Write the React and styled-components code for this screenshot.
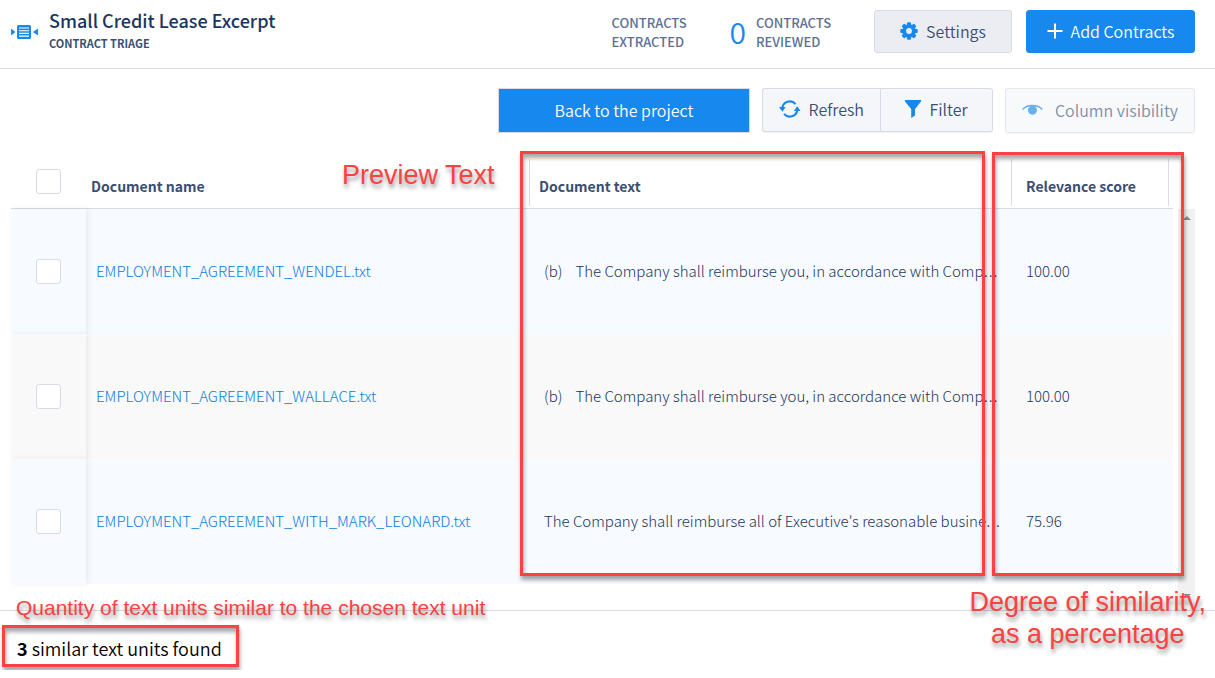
import React from 'react';
import styled, { createGlobalStyle } from 'styled-components';

const COLORS = {
  primary: '#1788ee',
  link: '#0c7be2',
  heading: '#1a3560',
  text: '#3a4f74',
  cell: '#21365c',
  muted: '#5c7096',
  border: '#d6dbe6',
  rowBlue: '#f7fbff',
  rowGray: '#f9f9f9',
  note: '#ff4141',
};

const ROWS = [
  {
    name: 'EMPLOYMENT_AGREEMENT_WENDEL.txt',
    clause: '(b)',
    text: 'The Company shall reimburse you, in accordance with Comp',
    score: '100.00',
  },
  {
    name: 'EMPLOYMENT_AGREEMENT_WALLACE.txt',
    clause: '(b)',
    text: 'The Company shall reimburse you, in accordance with Comp',
    score: '100.00',
  },
  {
    name: 'EMPLOYMENT_AGREEMENT_WITH_MARK_LEONARD.txt',
    text: "The Company shall reimburse all of Executive's reasonable busine",
    score: '75.96',
  },
];

const TriageIcon = () => (
  <svg width="28" height="16" viewBox="0 0 28 16" aria-hidden="true">
    <path d="M1 4.5v7L5.5 8z M28 4.5v7L23 8z" fill={COLORS.primary} />
    <rect x="7" y="1" width="14" height="14" rx="1.5" fill={COLORS.primary} />
    <path d="M9 4h10M9 6.7h10M9 9.4h10M9 12.1h10" stroke="#fff" strokeWidth="1.1" />
  </svg>
);

const GearIcon = () => (
  <svg width="18" height="18" viewBox="0 0 18 18" aria-hidden="true">
    <g fill={COLORS.primary}>
      {[0, 45, 90, 135].map((angle) => (
        <rect key={angle} x="7" y="0.3" width="4" height="17.4" rx="0.9" transform={`rotate(${angle} 9 9)`} />
      ))}
      <circle cx="9" cy="9" r="6.8" />
    </g>
    <circle cx="9" cy="9" r="2.9" fill="#ecedf3" />
  </svg>
);

const PlusIcon = () => (
  <svg width="16" height="16" viewBox="0 0 16 16" aria-hidden="true">
    <path d="M8 0.5v15M0.5 8h15" stroke="#fff" strokeWidth="2" />
  </svg>
);

const RefreshIcon = () => (
  <svg width="24" height="20" viewBox="0 0 24 20" aria-hidden="true">
    <g fill="none" stroke={COLORS.primary} strokeWidth="2.4">
      <path d="M3.6 9A8.4 8.4 0 0 1 18.4 4.6" />
      <path d="M20.4 11A8.4 8.4 0 0 1 5.6 15.4" />
    </g>
    <path d="M0 7.8h7.4L3.8 13z M24 12.2h-7.4L20.2 7z" fill={COLORS.primary} />
  </svg>
);

const FunnelIcon = () => (
  <svg width="16" height="18" viewBox="0 0 16 18" aria-hidden="true">
    <path d="M0 0h16v1.6L10 9v6.5L6.2 18V9L0 1.6z" fill={COLORS.primary} />
  </svg>
);

const EyeIcon = () => (
  <svg width="24" height="13" viewBox="0 0 24 13" aria-hidden="true">
    <path d="M0.8 6.4C5.5 0.4 18.5 0.4 23.2 6.4" fill="none" stroke={COLORS.primary} strokeWidth="1.8" />
    <circle cx="12" cy="7.2" r="5.2" fill={COLORS.primary} />
  </svg>
);

const App = () => {
  return (
    <Page>
      <GlobalStyle />
      <Header>
        <TriageIcon />
        <TitleBlock>
          <Title>Small Credit Lease Excerpt</Title>
          <Subtitle>CONTRACT TRIAGE</Subtitle>
        </TitleBlock>
        <Counter>
          <CounterLabel>CONTRACTS EXTRACTED</CounterLabel>
        </Counter>
        <Counter>
          <CounterValue>0</CounterValue>
          <CounterLabel>CONTRACTS REVIEWED</CounterLabel>
        </Counter>
        <HeaderActions>
          <SettingsButton>
            <GearIcon />
            Settings
          </SettingsButton>
          <AddButton>
            <PlusIcon />
            Add Contracts
          </AddButton>
        </HeaderActions>
      </Header>

      <Toolbar>
        <BackButton>Back to the project</BackButton>
        <ButtonGroup>
          <GroupButton>
            <RefreshIcon />
            Refresh
          </GroupButton>
          <GroupButton>
            <FunnelIcon />
            Filter
          </GroupButton>
        </ButtonGroup>
        <VisibilityButton disabled>
          <EyeIcon />
          Column visibility
        </VisibilityButton>
      </Toolbar>

      <TableArea>
        <Table>
          <colgroup>
            <CheckCol />
            <NameCol />
            <col />
            <ScoreCol />
            <EndCol />
          </colgroup>
          <thead>
            <tr>
              <CheckHead>
                <Checkbox type="checkbox" aria-label="Select all documents" />
              </CheckHead>
              <HeadCell $indent={5}>Document name</HeadCell>
              <HeadCell $indent={10} $divided>Document text</HeadCell>
              <HeadCell $indent={15} $divided>Relevance score</HeadCell>
              <HeadCell $divided />
            </tr>
          </thead>
          <tbody>
            {ROWS.map((row) => (
              <Row key={row.name}>
                <CheckCell>
                  <Checkbox type="checkbox" aria-label={`Select ${row.name}`} />
                </CheckCell>
                <Cell $indent={10}>
                  <DocLink href="#">{row.name}</DocLink>
                </Cell>
                <Cell $indent={15}>
                  {row.clause && <Clause>{row.clause}</Clause>}
                  {row.text}
                  <Ellipsis>…</Ellipsis>
                </Cell>
                <Cell $indent={15}>{row.score}</Cell>
                <Cell />
              </Row>
            ))}
          </tbody>
        </Table>
        <ScrollTrack aria-hidden="true">
          <ScrollArrow />
          <ScrollArrow $down />
        </ScrollTrack>
        <TextFrame />
        <ScoreFrame />
        <PreviewNote>Preview Text</PreviewNote>
      </TableArea>

      <Footer>
        <span>
          <strong>3</strong> similar text units found
        </span>
        <FoundFrame />
        <QuantityNote>Quantity of text units similar to the chosen text unit</QuantityNote>
        <DegreeNote>
          Degree of similarity,
          <br />
          as a percentage
        </DegreeNote>
      </Footer>
    </Page>
  );
};

export default App;

const GlobalStyle = createGlobalStyle`
  *, *::before, *::after {
    box-sizing: border-box;
  }
  body {
    margin: 0;
    background: #fff;
  }
  body, button {
    font-family: 'Noto Sans CJK SC', 'Noto Sans', sans-serif;
  }
`;

const Page = styled.div`
  color: ${COLORS.text};
  font-size: 15px;
  line-height: 20px;
`;

const Header = styled.header`
  display: flex;
  align-items: center;
  height: 69px;
  padding: 0 20px 5px 10px;
  border-bottom: 1px solid ${COLORS.border};
`;

const TitleBlock = styled.div`
  flex: 1;
  padding-left: 11px;
`;

const Title = styled.h1`
  margin: 0;
  color: ${COLORS.heading};
  font-size: 18px;
  font-weight: 500;
  line-height: 22px;
`;

const Subtitle = styled.div`
  font-size: 11px;
  font-weight: 700;
  line-height: 24px;
`;

const Counter = styled.div`
  display: flex;
  align-items: center;
  gap: 10px;
  margin-right: 40px;
`;

const CounterValue = styled.span`
  padding-bottom: 2px;
  color: ${COLORS.primary};
  font-size: 30px;
  font-weight: 350;
  line-height: 32px;
`;

const CounterLabel = styled.span`
  width: 78px;
  color: ${COLORS.muted};
  font-size: 13px;
  font-weight: 500;
  line-height: 19px;
`;

const HeaderActions = styled.div`
  display: flex;
  gap: 14px;
`;

const Button = styled.button`
  display: flex;
  align-items: center;
  justify-content: center;
  height: 44px;
  padding: 0 16px 2px;
  border: 1px solid ${COLORS.border};
  border-radius: 3px;
  background: #f4f6fa;
  color: ${COLORS.text};
  font-size: 16px;
  font-weight: 350;
  line-height: 24px;
  white-space: nowrap;
  cursor: pointer;
`;

const SettingsButton = styled(Button)`
  width: 138px;
  height: 43px;
  gap: 8px;
  background: #ecedf3;
`;

const AddButton = styled(Button)`
  width: 169px;
  height: 43px;
  gap: 8px;
  border-color: ${COLORS.primary};
  background: ${COLORS.primary};
  color: #fff;
`;

const Toolbar = styled.div`
  display: flex;
  justify-content: flex-end;
  gap: 12px;
  padding: 19px 20px 0;
`;

const BackButton = styled(Button)`
  width: 252px;
  height: 45px;
  border-radius: 0;
  background: ${COLORS.primary};
  color: #fff;
`;

const ButtonGroup = styled.div`
  display: flex;
`;

const GroupButton = styled(Button)`
  width: 118px;
  gap: 8px;
  box-shadow: 0 1px 1px #00000010;

  &:first-child {
    border-right: 0;
    border-radius: 3px 0 0 3px;
  }
  &:last-child {
    width: 113px;
    border-radius: 0 3px 3px 0;
  }
`;

const VisibilityButton = styled(Button)`
  width: 190px;
  height: 45px;
  gap: 12px;
  box-shadow: 0 1px 1px #00000010;
  opacity: 0.65;
  cursor: default;
`;

const TableArea = styled.main`
  position: relative;
  display: flex;
  gap: 5px;
  padding: 26px 20px 5px 11px;
`;

const Table = styled.table`
  flex: 1;
  width: 100%;
  table-layout: fixed;
  border-collapse: separate;
  border-spacing: 0;
  align-self: flex-start;
`;

const CheckCol = styled.col`
  width: 75px;
`;

const NameCol = styled.col`
  width: 443px;
`;

const ScoreCol = styled.col`
  width: 157px;
`;

const EndCol = styled.col`
  width: 5px;
`;

const HeadCell = styled.th`
  height: 50px;
  padding: 5px 0 0 ${(props) => props.$indent || 0}px;
  border-bottom: 1px solid ${COLORS.border};
  font-size: 14px;
  font-weight: 700;
  text-align: left;
  background: ${(props) =>
    props.$divided
      ? `linear-gradient(${COLORS.border}, ${COLORS.border}) 0 0 / 1px 47px no-repeat`
      : 'none'};
`;

const CheckHead = styled(HeadCell)`
  padding: 0 0 4px;
  text-align: center;
`;

const Row = styled.tr`
  background: ${COLORS.rowBlue};

  &:nth-child(even) {
    background: ${COLORS.rowGray};
  }
`;

const Cell = styled.td`
  height: 125px;
  padding: 0 0 2px ${(props) => props.$indent || 0}px;
  color: ${COLORS.cell};
  font-weight: 300;
  white-space: nowrap;
`;

const CheckCell = styled(Cell)`
  padding: 0;
  text-align: center;
  box-shadow: 2px 0 6px #00000012;
`;

const Checkbox = styled.input`
  appearance: none;
  display: block;
  width: 25px;
  height: 25px;
  margin: 0 auto;
  border: 1px solid ${COLORS.border};
  border-radius: 3px;
  background: #fff;
`;

const DocLink = styled.a`
  color: ${COLORS.link};
  text-decoration: none;
`;

const Clause = styled.span`
  margin-right: 13px;
`;

const Ellipsis = styled.span`
  font-family: 'Open Sans', sans-serif;
  font-size: 20px;
`;

const ScrollTrack = styled.div`
  display: flex;
  flex-direction: column;
  justify-content: space-between;
  align-items: center;
  width: 17px;
  margin-top: 50px;
  padding: 7px 0;
  min-height: 396px;
  background: #f1f1f1;
`;

const ScrollArrow = styled.span`
  border: 4px solid transparent;
  border-top-width: ${(props) => (props.$down ? 4 : 0)}px;
  border-bottom-width: ${(props) => (props.$down ? 0 : 4)}px;
  border-top-color: #8b8b8b;
  border-bottom-color: #8b8b8b;
`;

const Footer = styled.footer`
  position: relative;
  padding: 25px 17px 10px;
  border-top: 1px solid ${COLORS.border};
  color: #000;
  font-size: 18px;
  font-weight: 350;
  line-height: 24px;
`;

/* red callouts laid over the page */
const Frame = styled.div`
  position: absolute;
  border: 3px solid ${COLORS.note};
  box-shadow: 1px 4px 4px #00000059, inset 1px 4px 4px #00000059;
  pointer-events: none;
`;

const TextFrame = styled(Frame)`
  top: 18px;
  bottom: 34px;
  left: 520px;
  right: 230px;
`;

const ScoreFrame = styled(Frame)`
  top: 19px;
  bottom: 34px;
  right: 31px;
  width: 192px;
`;

const FoundFrame = styled(Frame)`
  top: 14px;
  left: 2px;
  width: 237px;
  height: 42px;
`;

const Note = styled.div`
  position: absolute;
  color: ${COLORS.note};
  font-family: 'Liberation Sans', Arial, sans-serif;
  font-size: 27px;
  font-weight: 400;
  line-height: 32px;
  text-align: center;
  text-shadow: 1px 4px 4px #00000066;
  white-space: nowrap;
  pointer-events: none;
`;

const PreviewNote = styled(Note)`
  top: 26px;
  left: 342px;
`;

const QuantityNote = styled(Note)`
  top: -19px;
  left: 16px;
  font-size: 21px;
`;

const DegreeNote = styled(Note)`
  top: -25px;
  right: 9px;
`;
